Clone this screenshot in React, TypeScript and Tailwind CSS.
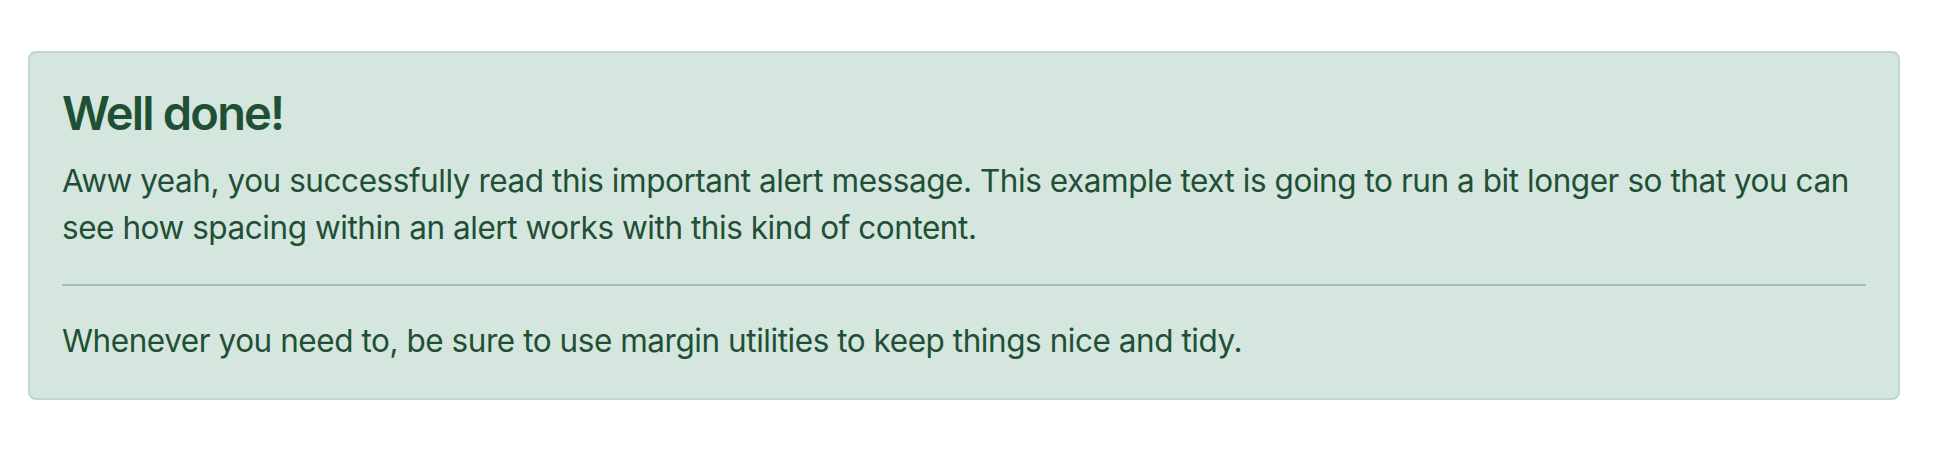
export default function App() {
  return (
    <div className="min-h-screen bg-white pt-[51px] pl-[28px] font-['Inter','Noto_Sans',sans-serif]">
      <div className="w-[1872px] rounded-[8px] border-2 border-[#bdd9cc] bg-[#d4e6dd] px-[32px] pt-[32px] pb-[34px] text-[#1f5035]">
        <h4 className="mb-[16px] text-[47px] leading-[56px] font-semibold tracking-[-1.8px]">Well done!</h4>
        <p className="text-[31.5px] leading-[47px] tracking-[-0.45px]">
          Aww yeah, you successfully read this important alert message. This example text is going to run a bit
          longer so that you can see how spacing within an alert works with this kind of content.
        </p>
        <hr className="mt-[33px] mb-[31px] border-0 border-t-2 border-[#a4c1b3]" />
        <p className="text-[31.5px] leading-[47px] tracking-[-0.45px]">
          Whenever you need to, be sure to use margin utilities to keep things nice and tidy.
        </p>
      </div>
    </div>
  );
}
